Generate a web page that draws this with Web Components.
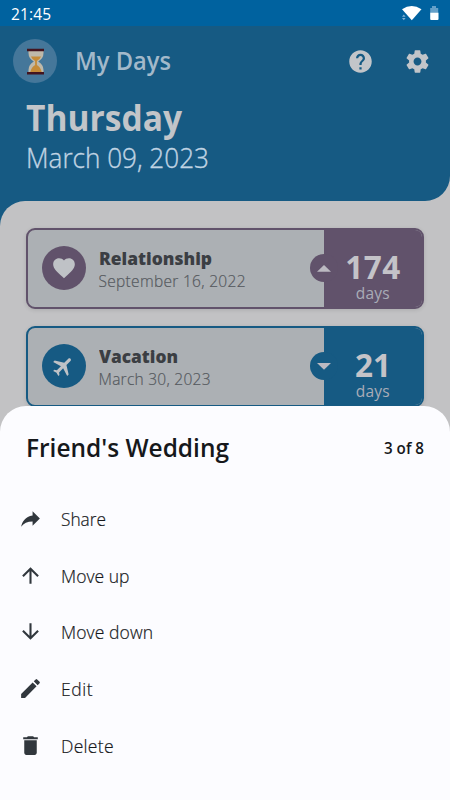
<!DOCTYPE html>
<html lang="en"><head><meta charset="utf-8"><title>My Days</title>
<style>
html,body{margin:0;height:100%;overflow:hidden}
body{font-family:"Open Sans","Noto Sans",sans-serif;background:#c2c2c4}
</style></head><body>
<my-days-app></my-days-app>
<script>
const define=(name,html,init)=>{
  const t=document.createElement('template');t.innerHTML=html;
  customElements.define(name,class extends HTMLElement{
    connectedCallback(){
      if(this.shadowRoot)return;
      this.attachShadow({mode:'open'}).append(t.content.cloneNode(true));
      if(init)init(this,this.shadowRoot);
    }
  });
};

/* One line of text fitted to an advance width: short text is tracked out, long text is condensed. */
define('fit-text',`<style>:host{display:block;white-space:nowrap;flex:none}span{display:inline-block;transform-origin:0 50%;line-height:inherit;vertical-align:top}</style><span><slot></slot></span>`,(h,r)=>{
  const s=r.querySelector('span'),w=+h.getAttribute('w');
  h.style.fontSize=h.getAttribute('size')+'px';
  h.style.fontWeight=h.getAttribute('weight')||400;
  h.style.lineHeight=h.getAttribute('line')+'px';
  const n=s.getBoundingClientRect().width;
  if(n<w)s.style.letterSpacing=(w-n)/(h.textContent.length-1)+'px';
  else s.style.transform='scaleX('+w/n+')';
  h.style.width=w+'px';
});

const ICONS={
  help:'<path d="M12 2C6.48 2 2 6.48 2 12s4.48 10 10 10 10-4.48 10-10S17.52 2 12 2zm1 17h-2v-2h2v2zm2.07-7.75l-.9.92C13.45 12.9 13 13.5 13 15h-2v-.5c0-1.1.45-2.1 1.17-2.83l1.24-1.26c.37-.36.59-.86.59-1.41 0-1.1-.9-2-2-2s-2 .9-2 2H8c0-2.21 1.79-4 4-4s4 1.79 4 4c0 .88-.36 1.68-.93 2.25z"/>',
  gear:'<path d="M19.43 12.98c.04-.32.07-.64.07-.98s-.03-.66-.07-.98l2.11-1.65c.19-.15.24-.42.12-.64l-2-3.46c-.12-.22-.39-.3-.61-.22l-2.49 1c-.52-.4-1.08-.73-1.69-.98l-.38-2.65C14.46 2.18 14.25 2 14 2h-4c-.25 0-.46.18-.49.42l-.38 2.65c-.61.25-1.17.59-1.69.98l-2.49-1c-.23-.09-.49 0-.61.22l-2 3.46c-.13.22-.07.49.12.64l2.11 1.65c-.04.32-.07.65-.07.98s.03.66.07.98l-2.11 1.65c-.19.15-.24.42-.12.64l2 3.46c.12.22.39.3.61.22l2.49-1c.52.4 1.08.73 1.69.98l.38 2.65c.03.24.24.42.49.42h4c.25 0 .46-.18.49-.42l.38-2.65c.61-.25 1.17-.59 1.69-.98l2.49 1c.23.09.49 0 .61-.22l2-3.46c.12-.22.07-.49-.12-.64l-2.11-1.65zM12 15.5c-1.93 0-3.5-1.57-3.5-3.5s1.57-3.5 3.5-3.5 3.5 1.57 3.5 3.5-1.57 3.5-3.5 3.5z"/>',
  heart:'<path d="M12 21.35l-1.45-1.32C5.4 15.36 2 12.28 2 8.5 2 5.42 4.42 3 7.5 3c1.74 0 3.41.81 4.5 2.09C13.09 3.81 14.76 3 16.5 3 19.58 3 22 5.42 22 8.5c0 3.78-3.4 6.86-8.55 11.54L12 21.35z"/>',
  plane:'<path transform="rotate(45 12 12)" d="M21 16v-2l-8-5V3.500c0-.83-.67-1.500-1.500-1.500S10 2.670 10 3.500V9l-8 5v2l8-2.500V19l-2 1.500V22l3.500-1 3.500 1v-1.500L13 19v-5.500l8 2.500z"/>',
  share:'<path d="M14 9V5l7 7-7 7v-4.100c-5 0-8.500 1.600-11 5.100 1-5 4-10 11-11z"/>',
  up:'<path d="M4 12l1.410 1.410L11 7.830V20h2V7.830l5.580 5.590L20 12l-8-8-8 8z"/>',
  down:'<path d="M20 12l-1.410-1.410L13 16.170V4h-2v12.170l-5.580-5.590L4 12l8 8 8-8z"/>',
  edit:'<path d="M3 17.250V21h3.750L17.810 9.940l-3.750-3.750L3 17.250zM20.710 7.040a1 1 0 0 0 0-1.410l-2.340-2.340a1 1 0 0 0-1.410 0l-1.830 1.830 3.750 3.750 1.830-1.830z"/>',
  trash:'<path d="M6 19c0 1.100.9 2 2 2h8c1.100 0 2-.9 2-2V7H6v12zM19 4h-3.500l-1-1h-5l-1 1H5v2h14V4z"/>'
};
define('ui-icon',`<style>:host{display:block;flex:none}svg{display:block;fill:currentColor;width:100%;height:100%}</style><svg viewBox="0 0 24 24"></svg>`,(h,r)=>{
  h.style.width=h.style.height=h.getAttribute('size')+'px';
  r.querySelector('svg').innerHTML=ICONS[h.getAttribute('name')];
});

define('status-bar',`<style>
:host{display:flex;justify-content:space-between;height:26px;background:#00629f;color:#fff;padding:1px 11px 0 11px;box-sizing:border-box}
svg{display:block;margin-top:-1px}
</style><fit-text w="40" size="15.5" line="26">21:45</fit-text>
<svg width="40" height="26" viewBox="399 0 40 26"><path d="M402 9.300Q411.700 2.700 421.500 9.300L411.800 20.300Z" fill="#fff"/><path d="M402 16.700l1.800-2.200 1.800 2.200zM402 18l1.800 2.200 1.800-2.200z" fill="#7db0d4"/><path d="M430.200 8h1.800V6h4v2h2.200v5h-8z" fill="#65a0c9"/><path d="M430.200 12.800h8.300v6.200a1 1 0 0 1-1 1h-6.300a1 1 0 0 1-1-1z" fill="#fff"/></svg>`);

define('app-header',`<style>
:host{display:block;height:175px;background:#165a83;border-radius:0 0 25px 0;color:#c2c5c9;box-sizing:border-box;padding:13px 19px 0 13px}
.bar{display:flex;align-items:center;height:44px}
.logo{width:44px;height:44px;border-radius:50%;background:#45779a;margin-right:18px}
.logo svg{display:block}
.title{color:#a3b9ca;flex:1}
ui-icon+ui-icon{margin-left:30px}
.date{padding:13px 0 0 13px}
.sub{color:#c0d4e3;-webkit-text-stroke:.35px #c0d4e3;padding-top:1px}
</style>
<div class="bar"><div class="logo"><svg width="44" height="44" viewBox="0 0 44 44"><path d="M15.500 11h15v3q0 5.500-5.300 8.500 5.300 3 5.300 8.500v2h-15v-2q0-5.500 5.300-8.500-5.300-3-5.300-8.500z" fill="#bfb9aa"/><path d="M18 17.500h10q-1 3-4.100 4.500v4q3.600 2 4.800 7H17.300q1.200-5 4.800-7v-4Q19 20.500 18 17.500z" fill="#c58b37"/><path d="M14 9.700h17v2.500H14zM14 32.900h17v2.500H14z" fill="#43141f"/></svg></div>
<div class="title"><fit-text w="96" size="24.500" weight="600" line="44">My Days</fit-text></div>
<ui-icon name="help" size="27"></ui-icon><ui-icon name="gear" size="27"></ui-icon></div>
<div class="date"><fit-text w="156" size="36.500" weight="700" line="42">Thursday</fit-text>
<fit-text class="sub" w="183" size="27.500" weight="300" line="38">March 09, 2023</fit-text></div>`);

define('day-card',`<style>
:host{display:flex;height:81px;box-sizing:border-box;border:2px solid var(--tone);border-radius:9px;background:#acb0b4;box-shadow:0 1px 4px rgba(0,0,0,.12);overflow:hidden}
.main{flex:1;display:flex;padding-left:13.500px}
.disc{width:44px;height:44px;border-radius:50%;background:var(--tone);color:#bfc2c6;display:grid;place-items:center;margin:16.500px 13px 0 0}
.copy{padding-top:15.500px}
.name{color:#3b3e43}.when{color:#55595e;-webkit-text-stroke:.2px #55595e}
.count{width:98.500px;background:var(--tone);position:relative;color:#c4c3c8;display:flex;flex-direction:column;align-items:center;padding-top:20px;box-sizing:border-box}
.knob{position:absolute;left:-14px;top:24px;width:28px;height:28px;border-radius:50%;background:var(--tone)}
.knob svg{display:block}
.unit{color:#a9acb7}
</style><div class="main"><div class="disc"></div><div class="copy"><div class="name"><slot name="name"></slot></div><div class="when"><slot name="when"></slot></div></div></div>
<div class="count"><div class="knob"><svg width="28" height="28"><path fill="#bbb9c1"/></svg></div><slot name="count"></slot><fit-text class="unit" w="34" size="15.500" weight="400" line="18">days</fit-text></div>`,(h,r)=>{
  const d=r.querySelector('.disc'),i=document.createElement('ui-icon');
  i.setAttribute('name',h.getAttribute('icon'));i.setAttribute('size',h.getAttribute('icon-size'));d.append(i);
  r.querySelector('path').setAttribute('d',h.getAttribute('dir')==='up'?'M7 17.800L14 11l7 6.800z':'M7 11l7 6.800 7-6.800z');
});

define('menu-row',`<style>
:host{display:flex;align-items:center;height:56.800px;padding-left:18px;color:#31373d}
::slotted(ui-icon){margin-right:18px}
.label{padding-top:1px;color:#16181b;-webkit-text-stroke:.2px #16181b}
</style><slot name="icon"></slot><div class="label"><slot></slot></div>`);

define('action-sheet',`<style>
:host{display:block;background:#fcfcff;border-radius:26px 26px 0 0;box-sizing:border-box;padding-top:23px;color:#16181b}
header{display:flex;justify-content:space-between;padding:0 26px;height:61px;box-sizing:border-box}
</style><header><slot name="title"></slot><slot name="position"></slot></header>
<slot></slot>`);

define('my-days-app',`<style>
:host{display:block;position:relative;width:450px;height:800px;overflow:hidden;background:#c2c2c4}
main{background:#165a83}
.top{background:#c2c2c4}
.list{display:flex;flex-direction:column;gap:17.300px;background:#c2c2c4;border-radius:25px 0 0 0;padding:26.500px 26px;height:400px}
action-sheet{position:absolute;left:0;right:0;top:406px;bottom:0}
</style>
<status-bar></status-bar><div class="top"><app-header></app-header></div>
<main><div class="list">
<day-card style="--tone:#61526b" icon="heart" icon-size="26" dir="up"><fit-text slot="name" w="113" size="18" weight="800" line="26">Relationship</fit-text><fit-text slot="when" w="147" size="15.500" weight="300" line="20">September 16, 2022</fit-text><fit-text slot="count" w="55" size="31.500" weight="700" line="34">174</fit-text></day-card>
<day-card style="--tone:#165a83" icon="plane" icon-size="25" dir="down"><fit-text slot="name" w="79" size="18" weight="800" line="26">Vacation</fit-text><fit-text slot="when" w="112" size="15.500" weight="300" line="20">March 30, 2023</fit-text><fit-text slot="count" w="36" size="31.500" weight="700" line="34">21</fit-text></day-card>
</div></main>
<action-sheet>
<fit-text slot="title" w="203" size="24.500" weight="600" line="38">Friend's Wedding</fit-text><fit-text slot="position" w="40" size="15.500" weight="600" line="39">3 of 8</fit-text>
<menu-row><ui-icon slot="icon" name="share" size="25"></ui-icon><fit-text w="45" size="17.500" weight="300" line="28">Share</fit-text></menu-row>
<menu-row><ui-icon slot="icon" name="up" size="25"></ui-icon><fit-text w="68.500" size="17.500" weight="300" line="28">Move up</fit-text></menu-row>
<menu-row><ui-icon slot="icon" name="down" size="25"></ui-icon><fit-text w="92" size="17.500" weight="300" line="28">Move down</fit-text></menu-row>
<menu-row><ui-icon slot="icon" name="edit" size="25"></ui-icon><fit-text w="31.500" size="17.500" weight="300" line="28">Edit</fit-text></menu-row>
<menu-row><ui-icon slot="icon" name="trash" size="25"></ui-icon><fit-text w="52.500" size="17.500" weight="300" line="28">Delete</fit-text></menu-row>
</action-sheet>`);
</script></body></html>
